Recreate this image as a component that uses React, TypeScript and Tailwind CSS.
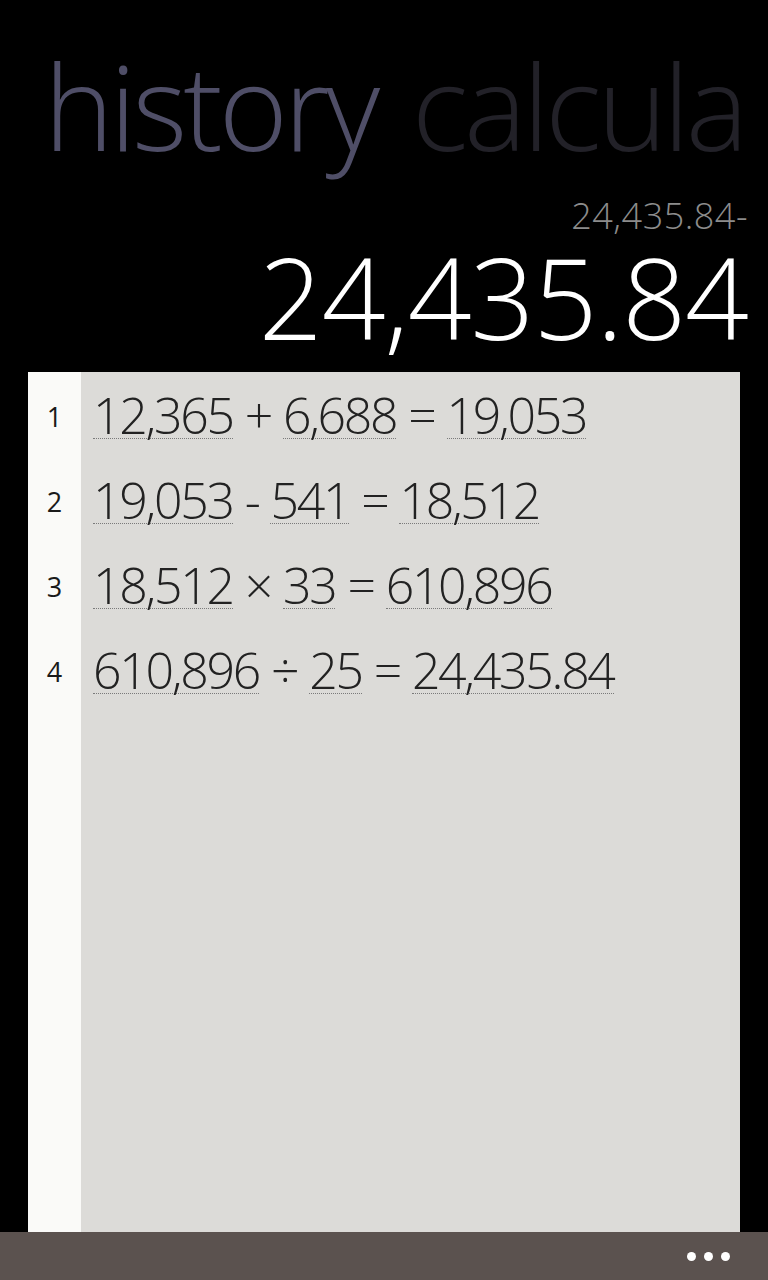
import * as React from 'react';

const rows = [
  { n: 1, a: '12,365', op: '+', b: '6,688', r: '19,053' },
  { n: 2, a: '19,053', op: '-', b: '541', r: '18,512' },
  { n: 3, a: '18,512', op: '×', b: '33', r: '610,896' },
  { n: 4, a: '610,896', op: '÷', b: '25', r: '24,435.84' },
];

function Num({ children }: { children: React.ReactNode }) {
  return (
    <span className="inline-block border-b border-dotted border-[#7a7a7a] leading-[46px]">
      {children}
    </span>
  );
}

export default function App() {
  return (
    <div className="w-[768px] h-[1280px] bg-black flex flex-col overflow-hidden font-['Open_Sans','Noto_Sans',sans-serif] font-light">
      <div className="h-[196px] w-[745px] pl-[44px] pt-[41px] whitespace-nowrap overflow-hidden text-[118px] leading-[130px] tracking-[-4px]">
        <span className="text-[#4f4e67]">history</span>
        <span className="ml-[36px] text-[#222128]">calculator</span>
      </div>
      <div className="pr-[20px] text-right text-[36px] leading-[40px] text-[#8c8c8c] tracking-[0.5px] mb-[2px]">24,435.84-</div>
      <div className="pr-[20px] text-right text-[112px] leading-[118px] text-white tracking-[-1px]">24,435.84</div>
      <div className="flex-1 mx-[28px] mt-[16px] flex">
        <div className="w-[53px] bg-[#fafaf8]">
          {rows.map((row) => (
            <div key={row.n} className="h-[85px] flex items-center justify-center pt-[6px] text-[27px] text-[#1a1a1a] font-normal">
              {row.n}
            </div>
          ))}
        </div>
        <div className="flex-1 bg-[#dcdbd8] pl-[12px]">
          {rows.map((row) => (
            <div key={row.n} className="h-[85px] flex items-center pt-[2px] text-[50px] text-[#222] tracking-[-2.3px] gap-[12px] whitespace-nowrap">
              <Num>{row.a}</Num>
              <span>{row.op}</span>
              <Num>{row.b}</Num>
              <span>=</span>
              <Num>{row.r}</Num>
            </div>
          ))}
        </div>
      </div>
      <div className="h-[48px] bg-[#5b524f] flex items-center justify-end pr-[38px] gap-[8px]">
        <span className="w-[9px] h-[9px] rounded-full bg-white" />
        <span className="w-[9px] h-[9px] rounded-full bg-white" />
        <span className="w-[9px] h-[9px] rounded-full bg-white" />
      </div>
    </div>
  );
}
